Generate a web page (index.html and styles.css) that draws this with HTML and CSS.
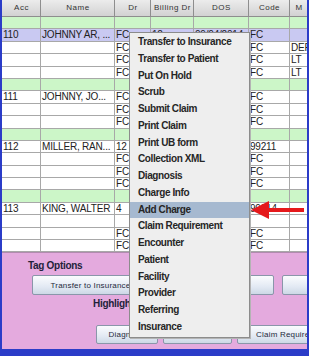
FILE: index.html
```html
<!DOCTYPE html>
<html lang="en">
<head>
  <meta charset="UTF-8">
  <meta name="viewport" content="width=device-width, initial-scale=1.0">
  <title>Claims</title>
  <link rel="stylesheet" href="styles.css">
</head>
<body>
  <div class="frame">
    <div class="grid">
      <div class="row head">
        <div class="cell">Acc</div>
        <div class="cell">Name</div>
        <div class="cell">Dr</div>
        <div class="cell">Billing Dr</div>
        <div class="cell">DOS</div>
        <div class="cell">Code</div>
        <div class="cell">M</div>
      </div>

      <!-- 110 -->
      <div class="row green"><div class="cell"></div><div class="cell"></div><div class="cell"></div><div class="cell"></div><div class="cell"></div><div class="cell"></div><div class="cell"></div></div>
      <div class="row sel"><div class="cell">110</div><div class="cell">JOHNNY AR, ...</div><div class="cell">FC</div><div class="cell">12</div><div class="cell">09/04/2014</div><div class="cell">FC</div><div class="cell"></div></div>
      <div class="row"><div class="cell"></div><div class="cell"></div><div class="cell">FC</div><div class="cell"></div><div class="cell"></div><div class="cell">FC</div><div class="cell">DEF</div></div>
      <div class="row"><div class="cell"></div><div class="cell"></div><div class="cell">FC</div><div class="cell"></div><div class="cell"></div><div class="cell">FC</div><div class="cell">LT</div></div>
      <div class="row"><div class="cell"></div><div class="cell"></div><div class="cell">FC</div><div class="cell"></div><div class="cell"></div><div class="cell">FC</div><div class="cell">LT</div></div>

      <!-- 111 -->
      <div class="row green"><div class="cell"></div><div class="cell"></div><div class="cell"></div><div class="cell"></div><div class="cell"></div><div class="cell"></div><div class="cell"></div></div>
      <div class="row"><div class="cell">111</div><div class="cell">JOHNNY, JO...</div><div class="cell">FC</div><div class="cell"></div><div class="cell"></div><div class="cell">FC</div><div class="cell"></div></div>
      <div class="row"><div class="cell"></div><div class="cell"></div><div class="cell">FC</div><div class="cell"></div><div class="cell"></div><div class="cell">FC</div><div class="cell"></div></div>
      <div class="row"><div class="cell"></div><div class="cell"></div><div class="cell">FC</div><div class="cell"></div><div class="cell"></div><div class="cell">FC</div><div class="cell"></div></div>

      <!-- 112 -->
      <div class="row green"><div class="cell"></div><div class="cell"></div><div class="cell"></div><div class="cell"></div><div class="cell"></div><div class="cell"></div><div class="cell"></div></div>
      <div class="row"><div class="cell">112</div><div class="cell">MILLER, RAN...</div><div class="cell">12</div><div class="cell"></div><div class="cell"></div><div class="cell">99211</div><div class="cell"></div></div>
      <div class="row"><div class="cell"></div><div class="cell"></div><div class="cell">FC</div><div class="cell"></div><div class="cell"></div><div class="cell">FC</div><div class="cell"></div></div>
      <div class="row"><div class="cell"></div><div class="cell"></div><div class="cell">FC</div><div class="cell"></div><div class="cell"></div><div class="cell">FC</div><div class="cell"></div></div>
      <div class="row"><div class="cell"></div><div class="cell"></div><div class="cell">FC</div><div class="cell"></div><div class="cell"></div><div class="cell">FC</div><div class="cell"></div></div>

      <!-- 113 -->
      <div class="row green"><div class="cell"></div><div class="cell"></div><div class="cell"></div><div class="cell"></div><div class="cell"></div><div class="cell"></div><div class="cell"></div></div>
      <div class="row"><div class="cell">113</div><div class="cell">KING, WALTER</div><div class="cell">4</div><div class="cell"></div><div class="cell"></div><div class="cell">99214</div><div class="cell"></div></div>
      <div class="row"><div class="cell"></div><div class="cell"></div><div class="cell"></div><div class="cell"></div><div class="cell"></div><div class="cell"></div><div class="cell"></div></div>
      <div class="row"><div class="cell"></div><div class="cell"></div><div class="cell">FC</div><div class="cell"></div><div class="cell"></div><div class="cell">FC</div><div class="cell"></div></div>
      <div class="row"><div class="cell"></div><div class="cell"></div><div class="cell">FC</div><div class="cell"></div><div class="cell"></div><div class="cell">FC</div><div class="cell"></div></div>
    </div>

    <div class="panel">
      <div class="label tag-label">Tag Options</div>
      <div class="btns tag-btns">
        <button class="btn">Transfer to Insurance</button>
        <button class="btn">Transfer to Patient</button>
        <button class="btn">Put On Hold</button>
      </div>
      <div class="label hl-label">Highlight Options</div>
      <div class="btns hl-btns">
        <button class="btn diag">Diagnosis</button>
        <button class="btn charge">Charge Info</button>
        <button class="btn claim">Claim Requirement</button>
      </div>
    </div>

    <ul class="menu">
      <li>Transfer to Insurance</li>
      <li>Transfer to Patient</li>
      <li>Put On Hold</li>
      <li>Scrub</li>
      <li>Submit Claim</li>
      <li>Print Claim</li>
      <li>Print UB form</li>
      <li>Collection XML</li>
      <li>Diagnosis</li>
      <li>Charge Info</li>
      <li class="active">Add Charge</li>
      <li>Claim Requirement</li>
      <li>Encounter</li>
      <li>Patient</li>
      <li>Facility</li>
      <li>Provider</li>
      <li>Referring</li>
      <li>Insurance</li>
    </ul>

    <svg class="arrow" width="60" height="20" viewBox="0 0 60 20">
      <polygon points="5,10 23,1 23,19" fill="#e5191b"/>
      <rect x="21" y="8" width="37" height="4" fill="#e5191b"/>
    </svg>
  </div>
</body>
</html>
```

FILE: styles.css
```css
body {
  margin: 0;
  font-family: "Liberation Sans", Arial, sans-serif;
  overflow: hidden;
}
.frame {
  position: relative;
  width: 309px;
  height: 356px;
  box-sizing: border-box;
  border-left: 2px solid #2b3cc8;
  border-right: 2px solid #2b3cc8;
  border-bottom: 7px solid #2b3cc8;
  display: flex;
  flex-direction: column;
  overflow: hidden;
}
.grid {
  background: #fff;
}
.row {
  display: grid;
  grid-template-columns: 39px 74px 36px 43px 55px 41px 1fr;
  height: 12.4px;
}
.cell {
  box-sizing: border-box;
  border-right: 1px solid #a8a8a8;
  border-bottom: 1px solid #a8a8a8;
  padding-left: 1px;
  font-size: 10px;
  line-height: 11px;
  letter-spacing: -0.2px;
  color: #222;
  white-space: nowrap;
  overflow: hidden;
}
.row .cell:last-child {
  border-right: none;
}
.row.head {
  height: 17px;
}
.head .cell {
  background: linear-gradient(#ececec, #d2d2d2);
  border-right-color: #8e8e8e;
  border-bottom-color: #8e8e8e;
  font-size: 8px;
  line-height: 16px;
  letter-spacing: 0.5px;
  text-align: center;
  color: #333;
}
.row.green .cell {
  background: #ccf6c8;
}
.row.sel .cell {
  background: #c9c9f2;
}
.panel {
  flex: 1;
  background: #e4aade;
  border-top: 1px solid #b08aae;
}
.label {
  font-size: 10px;
  font-weight: bold;
  letter-spacing: -0.3px;
  line-height: 12px;
  color: #22223a;
}
.tag-label {
  margin: 7px 0 0 26px;
}
.hl-label {
  margin: 3px 0 0 91px;
}
.btns {
  display: flex;
  white-space: nowrap;
}
.tag-btns {
  margin: 3px 0 0 30px;
  gap: 8px;
}
.hl-btns {
  margin: 15px 0 0 94px;
  gap: 5px;
}
.btn {
  flex: none;
  height: 20px;
  padding: 0;
  border: 1px solid #8a96aa;
  border-radius: 2px;
  background: linear-gradient(#fbfcfe, #e2e9f3 60%, #cdd8e6);
  font-family: "Liberation Sans", Arial, sans-serif;
  font-size: 8px;
  letter-spacing: 0.2px;
  color: #1e2a3c;
}
.tag-btns .btn {
  width: 117px;
}
.hl-btns .btn {
  height: 19px;
}
.diag {
  width: 62px;
}
.charge {
  width: 69px;
}
.claim {
  width: 110px;
}
.menu {
  position: absolute;
  left: 127px;
  top: 32px;
  width: 119px;
  margin: 0;
  padding: 1px 0;
  list-style: none;
  background: #eeeeee;
  border: 1px solid #8c8c8c;
  box-shadow: 1px 1px 0 #b4b4b4;
}
.menu li {
  height: 16.76px;
  line-height: 16.76px;
  padding-left: 8px;
  font-size: 10px;
  font-weight: bold;
  letter-spacing: -0.4px;
  color: #262626;
  white-space: nowrap;
}
.menu li.active {
  background: #a6b9d0;
}
.arrow {
  position: absolute;
  left: 244px;
  top: 200px;
}
```
